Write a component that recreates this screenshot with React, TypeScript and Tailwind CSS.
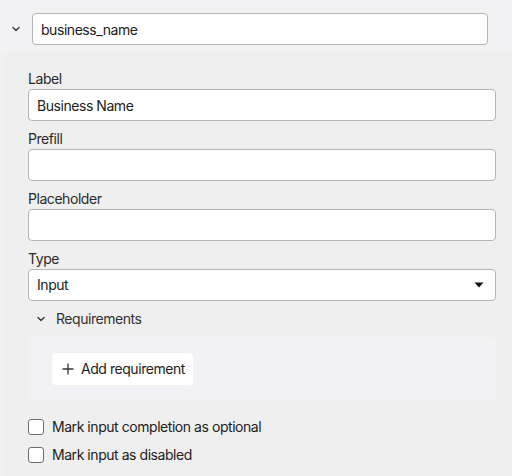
import React from 'react';

const Chevron: React.FC<{ className?: string }> = ({ className }) => (
  <svg className={className} width="10" height="10" viewBox="0 0 10 10" fill="none">
    <path d="M2 3.5 L5 6.5 L8 3.5" stroke="#333" strokeWidth="1.3" strokeLinecap="round" strokeLinejoin="round" />
  </svg>
);

const Field: React.FC<{ label: string; value?: string }> = ({ label, value = '' }) => (
  <div className="flex flex-col">
    <label className="text-sm leading-5 text-[#2a2a2a]">{label}</label>
    <input
      readOnly
      value={value}
      className="h-8 w-full rounded border border-[#b5b5b5] bg-white px-2 text-sm tracking-[-0.45px] text-[#222] outline-none"
    />
  </div>
);

const Checkbox: React.FC<{ label: string }> = ({ label }) => (
  <div className="flex items-center gap-2 h-5">
    <span className="w-4 h-4 rounded-[3px] border-[1.5px] border-[#6e6e6e] bg-white" />
    <span className="text-sm leading-5 text-[#222]">{label}</span>
  </div>
);

export default function App() {
  return (
    <div
      className="w-[512px] h-[476px] overflow-hidden bg-[#f2f2f4] tracking-[-0.45px]"
      style={{ fontFamily: 'Inter, "Noto Sans", sans-serif' }}
    >
      {/* header row */}
      <div className="flex items-center pt-[13px]">
        <div className="w-8 flex justify-center">
          <Chevron />
        </div>
        <input
          readOnly
          value="business_name"
          className="h-8 w-[456px] rounded border border-[#b5b5b5] bg-white px-2 text-sm tracking-[-0.45px] text-[#222] outline-none"
        />
      </div>

      {/* settings panel */}
      <div className="ml-1 mt-2 bg-[#efefef] pl-6 pr-4 pt-4 pb-4 flex flex-col gap-2">
        <Field label="Label" value="Business Name" />
        <Field label="Prefill" />
        <Field label="Placeholder" />

        <div className="flex flex-col">
          <label className="text-sm leading-5 text-[#2a2a2a]">Type</label>
          <div className="h-8 w-full rounded border border-[#b5b5b5] bg-white px-2 flex items-center justify-between">
            <span className="text-sm text-[#222]">Input</span>
            <svg width="10" height="6" viewBox="0 0 10 6" className="mr-[3px]">
              <path d="M0.5 0.5 H9.5 L5 5.5 Z" fill="#111" />
            </svg>
          </div>
        </div>

        <div className="flex items-center h-5 pl-2 gap-[10px]">
          <Chevron />
          <span className="text-sm text-[#333]">Requirements</span>
        </div>

        <div className="rounded bg-[#f2f2f4] pl-6 py-4">
          <button className="h-8 flex items-center gap-[7px] rounded bg-white pl-[10px] pr-2 text-sm text-[#222]">
            <svg width="12" height="12" viewBox="0 0 12 12">
              <path d="M6 0.5 V11.5 M0.5 6 H11.5" stroke="#333" strokeWidth="1.3" />
            </svg>
            Add requirement
          </button>
        </div>

        <div className="mt-2 flex flex-col gap-2">
          <Checkbox label="Mark input completion as optional" />
          <Checkbox label="Mark input as disabled" />
        </div>
      </div>
    </div>
  );
}
